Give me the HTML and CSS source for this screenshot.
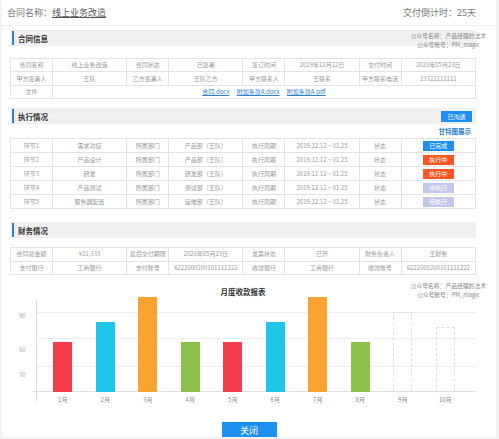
FILE: index.html
```html
<!DOCTYPE html>
<html lang="zh">

<head>
    <meta charset="UTF-8">
    <title>合同详情</title>
    <link rel="stylesheet" href="styles.css">
</head>

<body>
    <div class="page">
        <div class="top">
            <div class="name">合同名称：<span class="name-val">线上业务改造</span></div>
            <div class="countdown">交付倒计时：25天</div>
        </div>

        <!-- 合同信息 -->
        <div class="section sec-info">
            <div class="sec-head">合同信息</div>
            <div class="wm">
                <div>公众号名称：产品经理的法术</div>
                <div>公众号账号：PM_magic</div>
            </div>
            <table class="grid">
                <colgroup>
                    <col class="c-label"><col class="c-val"><col class="c-label"><col class="c-val">
                    <col class="c-label"><col class="c-val"><col class="c-label"><col class="c-val">
                </colgroup>
                <tr>
                    <td>合同名称</td><td>线上业务改造</td><td>合同状态</td><td>已签署</td>
                    <td>签订时间</td><td>2019年12月12日</td><td>交付时间</td><td>2020年05月23日</td>
                </tr>
                <tr>
                    <td>甲方签署人</td><td>王队</td><td>乙方签署人</td><td>王队乙方</td>
                    <td>甲方联系人</td><td>王联系</td><td>甲方联系电话</td><td>13322211111</td>
                </tr>
                <tr>
                    <td>文件</td>
                    <td colspan="7"><a href="#">合同.docx</a> <a href="#">附加条款A.docx</a> <a href="#">附加条款A.pdf</a></td>
                </tr>
            </table>
        </div>

        <!-- 执行情况 -->
        <div class="section sec-exec">
            <div class="sec-head">执行情况<span class="btn btn-blue head-btn">已沟通</span></div>
            <div class="gantt"><a href="#">甘特图展示</a></div>
            <table class="grid exec">
                <colgroup>
                    <col class="c-label"><col class="c-val"><col class="c-label"><col class="c-val">
                    <col class="c-label"><col class="c-val"><col class="c-label"><col class="c-val">
                </colgroup>
                <tr>
                    <td>环节1</td><td>需求对接</td><td>所属部门</td><td>产品部（王队）</td>
                    <td>执行周期</td><td>2019.12.12 ~ 01.25</td><td>状态</td><td><span class="btn btn-blue">已完成</span></td>
                </tr>
                <tr>
                    <td>环节2</td><td>产品设计</td><td>所属部门</td><td>产品部（王队）</td>
                    <td>执行周期</td><td>2019.12.12 ~ 01.25</td><td>状态</td><td><span class="btn btn-red">执行中</span></td>
                </tr>
                <tr>
                    <td>环节3</td><td>研发</td><td>所属部门</td><td>研发部（王队）</td>
                    <td>执行周期</td><td>2019.12.12 ~ 01.25</td><td>状态</td><td><span class="btn btn-red">执行中</span></td>
                </tr>
                <tr>
                    <td>环节4</td><td>产品测试</td><td>所属部门</td><td>测试部（王队）</td>
                    <td>执行周期</td><td>2019.12.12 ~ 01.25</td><td>状态</td><td><span class="btn btn-gray">待执行</span></td>
                </tr>
                <tr>
                    <td>环节5</td><td>服务器配置</td><td>所属部门</td><td>运维部（王队）</td>
                    <td>执行周期</td><td>2019.12.12 ~ 01.25</td><td>状态</td><td><span class="btn btn-gray">待执行</span></td>
                </tr>
            </table>
        </div>

        <!-- 财务情况 -->
        <div class="section sec-fin">
            <div class="sec-head">财务情况</div>
            <table class="grid fin">
                <colgroup>
                    <col class="c-label"><col class="c-val"><col class="c-label"><col class="c-val">
                    <col class="c-label"><col class="c-val"><col class="c-label"><col class="c-val">
                </colgroup>
                <tr>
                    <td>合同总金额</td><td>¥21,333</td><td>最后交付期限</td><td>2020年05月23日</td>
                    <td>发票状态</td><td>已开</td><td>财务负责人</td><td>王财务</td>
                </tr>
                <tr>
                    <td>支付银行</td><td>工商银行</td><td>支付账号</td><td>6222000200101111222</td>
                    <td>收款银行</td><td>工商银行</td><td>收款账号</td><td>6222000200101111222</td>
                </tr>
            </table>

            <div class="chart">
                <div class="chart-title">月度收款报表</div>
                <div class="wm wm-chart">
                    <div>公众号名称：产品经理的法术</div>
                    <div>公众号账号：PM_magic</div>
                </div>
                <div class="plot">
                    <div class="gl" style="top:15px"></div>
                    <div class="gl" style="top:41px"></div>
                    <div class="gl" style="top:69px"></div>
                    <div class="axis-y"></div>
                    <div class="axis-x"></div>
                    <span class="ylab" style="top:15px">90</span>
                    <span class="ylab" style="top:49px">60</span>
                    <span class="ylab" style="top:74px">30</span>
                    <div class="bars">
                        <div class="slot"><div class="bar red" style="height:50px"></div></div>
                        <div class="slot"><div class="bar cyan" style="height:70px"></div></div>
                        <div class="slot"><div class="bar orange" style="height:95px"></div></div>
                        <div class="slot"><div class="bar green" style="height:50px"></div></div>
                        <div class="slot"><div class="bar red" style="height:50px"></div></div>
                        <div class="slot"><div class="bar cyan" style="height:70px"></div></div>
                        <div class="slot"><div class="bar orange" style="height:95px"></div></div>
                        <div class="slot"><div class="bar green" style="height:50px"></div></div>
                        <div class="slot"><div class="bar empty" style="height:80px"></div></div>
                        <div class="slot"><div class="bar empty" style="height:65px"></div></div>
                    </div>
                </div>
                <div class="months">
                    <span>1月</span><span>2月</span><span>3月</span><span>4月</span><span>5月</span>
                    <span>6月</span><span>7月</span><span>8月</span><span>9月</span><span>10月</span>
                </div>
            </div>
        </div>

        <div class="foot">
            <button class="close">关闭</button>
        </div>
    </div>
</body>

</html>
```

FILE: styles.css
```css
* {
    margin: 0;
    padding: 0;
    box-sizing: border-box;
}

a {
    color: #2b7fd0;
}

body {
    background-color: #f2f2f2;
    font-family: "Noto Sans CJK SC", "Noto Sans", sans-serif;
}

.page {
    position: relative;
    width: 494px;
    height: 437px;
    margin-left: 2px;
    background-color: #fff;
}

.top {
    height: 26px;
    display: flex;
    justify-content: space-between;
    align-items: center;
    padding: 0 20px 0 5px;
    border-bottom: 1px solid #eee;
    font-size: 9px;
    color: #777;
}

.top .name-val {
    color: #555;
    text-decoration: underline;
}

.section {
    position: relative;
    margin: 0 20px 0 8px;
}

.sec-info {
    margin-top: 4px;
}

.sec-exec {
    margin-top: 9px;
}

.sec-fin {
    margin-top: 13px;
}

.sec-head {
    height: 16px;
    display: flex;
    align-items: center;
    background-color: #f0f0f0;
    font-size: 7.5px;
    font-weight: bold;
    color: #333;
}

.sec-head::before {
    content: "";
    width: 2px;
    height: 14px;
    margin: 0 4px 0 2px;
    background-color: #2b7fd0;
}

.wm {
    position: absolute;
    top: 2px;
    right: -10px;
    font-size: 5.8px;
    line-height: 8.6px;
    color: #888;
    text-align: center;
}

.wm-chart {
    top: -4px;
}

/* 表格 */
.grid {
    width: 100%;
    border-collapse: collapse;
    table-layout: fixed;
    font-size: 6px;
    color: #999;
    text-align: center;
}

.sec-info .grid {
    margin-top: 12px;
}

.grid .c-label {
    width: 9%;
}

.grid .c-val {
    width: 16%;
}

.grid td {
    height: 13.4px;
    padding: 0;
    line-height: 12px;
    border: 1px solid #e3e3e3;
    white-space: nowrap;
    overflow: hidden;
}

.grid a {
    margin: 0 3px;
}

.exec td {
    height: 14px;
}

.fin {
    margin-top: 9px;
}

.fin td {
    height: 13.5px;
}

/* 按钮 */
.btn {
    display: inline-block;
    width: 31px;
    height: 10px;
    line-height: 10px;
    font-size: 6px;
    font-weight: normal;
    color: #fff;
    text-align: center;
    vertical-align: middle;
}

.btn-blue {
    background-color: #1f8ef1;
}

.btn-red {
    background-color: #ff5520;
}

.btn-gray {
    background-color: #c3c8ea;
}

.head-btn {
    height: 11px;
    line-height: 11px;
    margin-left: auto;
    margin-right: 4px;
}

.gantt {
    height: 14px;
    line-height: 14px;
    padding-right: 5px;
    text-align: right;
    font-size: 6.5px;
    font-weight: bold;
}

.gantt a {
    text-decoration: none;
}

/* 图表 */
.chart {
    position: relative;
    margin-top: 11px;
}

.chart-title {
    height: 11px;
    line-height: 11px;
    text-align: center;
    font-size: 7.5px;
    font-weight: bold;
    color: #333;
}

.plot {
    position: relative;
    width: 440px;
    height: 95px;
    margin-left: 26px;
}

.plot .gl {
    position: absolute;
    left: 0;
    right: 0;
    height: 1px;
    background-color: #eee;
}

.axis-y {
    position: absolute;
    left: 0;
    top: 3px;
    bottom: -9px;
    width: 1px;
    background-color: #ddd;
}

.axis-x {
    position: absolute;
    left: -4px;
    right: 0;
    bottom: 0;
    height: 1px;
    background-color: #ddd;
}

.ylab {
    position: absolute;
    left: -17px;
    font-size: 6px;
    line-height: 8px;
    color: #aaa;
}

.bars {
    position: relative;
    display: flex;
    align-items: flex-end;
    height: 100%;
    padding-left: 5.5px;
}

.slot {
    width: 42.5px;
    display: flex;
    justify-content: center;
}

.bar {
    width: 19px;
}

.bar.red {
    background-color: #f43b4c;
}

.bar.cyan {
    background-color: #1dc6e8;
}

.bar.orange {
    background-color: #f9a330;
}

.bar.green {
    background-color: #8cc24a;
}

.bar.empty {
    border: 1px dashed #ddd;
    border-bottom: none;
}

.months {
    display: flex;
    height: 16px;
    margin-left: 31.5px;
    font-size: 6px;
    line-height: 16px;
    color: #888;
}

.months span {
    width: 42.5px;
    text-align: center;
}

.foot {
    margin-top: 7px;
    text-align: center;
}

.close {
    width: 55px;
    height: 18px;
    border: none;
    background-color: #1f8ef1;
    color: #fff;
    font-family: inherit;
    font-size: 9px;
}
```
